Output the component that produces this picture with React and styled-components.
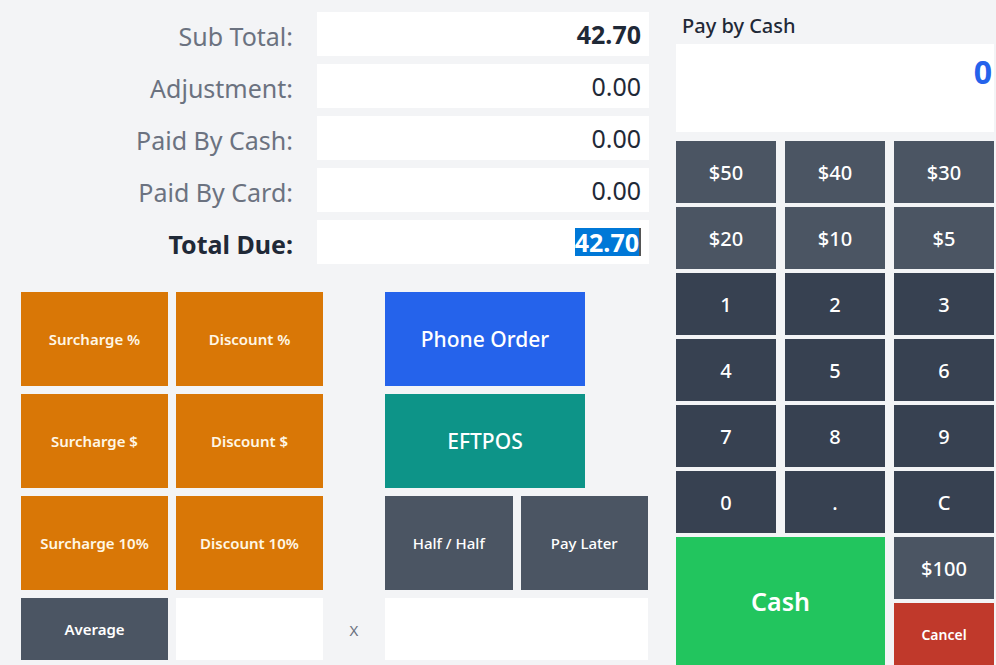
import React from "react";
import styled, { createGlobalStyle } from "styled-components";

const Global = createGlobalStyle`
  html, body { margin: 0; padding: 0; background: #f3f4f6; }
  body { font-family: "Noto Sans", "Open Sans", sans-serif; overflow: hidden; }
  * { box-sizing: border-box; }
`;

const Page = styled.div`
  display: flex;
  gap: 27px;
  padding: 12px 0 0 21px;
  height: 665px;
  width: 996px;
  overflow: hidden;
  background: #f3f4f6;
`;

const LeftCol = styled.div`
  width: 628px;
  display: flex;
  flex-direction: column;
  gap: 28px;
`;

const Summary = styled.div`
  display: flex;
  flex-direction: column;
  gap: 8px;
`;

const SummaryRow = styled.div`
  display: grid;
  grid-template-columns: 272px 332px;
  column-gap: 24px;
  height: 44px;
  align-items: center;
`;

const Label = styled.div`
  text-align: right;
  font-size: 25px;
  color: ${(p) => (p.$strong ? "#1f2937" : "#6b7280")};
  font-weight: ${(p) => (p.$strong ? 700 : 400)};
  padding-top: 4px;
`;

const ValueBox = styled.div`
  height: 44px;
  background: #fff;
  display: flex;
  align-items: center;
  justify-content: flex-end;
  padding-right: 8px;
  font-size: 25px;
  color: #1f2937;
  font-weight: ${(p) => (p.$bold ? 700 : 400)};
`;

const Selected = styled.span`
  background: #0078d7;
  color: #fff;
  line-height: 28px;
  border-right: 2px solid #555;
`;

const ActionGrid = styled.div`
  display: grid;
  grid-template-columns: 147px 147px 46px 263px;
  grid-template-rows: 94px 94px 94px 62px;
  gap: 8px;
`;

const Btn = styled.button`
  border: none;
  margin: 0;
  padding: 0;
  font-family: inherit;
  display: flex;
  align-items: center;
  justify-content: center;
  color: ${(p) => p.$fg || "#fff"};
  background: ${(p) => p.$bg};
  font-size: ${(p) => p.$size || 15}px;
  font-weight: ${(p) => p.$weight || 600};
  cursor: pointer;
`;

const WideBtn = styled(Btn)`
  width: 200px;
`;

const Split = styled.div`
  display: flex;
  gap: 8px;
  & > * { flex: 1; }
`;

const Blank = styled.div`
  background: #fff;
`;

const XMark = styled.div`
  display: flex;
  align-items: center;
  justify-content: center;
  color: #6b7280;
  font-size: 15px;
  padding-top: 2px;
`;

const RightCol = styled.div`
  width: 318px;
  display: flex;
  flex-direction: column;
`;

const PanelTitle = styled.div`
  height: 32px;
  padding: 0 0 6px 6px;
  font-size: 20px;
  color: #1f2937;
  font-weight: 500;
  display: flex;
  align-items: center;
`;

const Display = styled.div`
  height: 88px;
  background: #fff;
  margin-bottom: 9px;
  display: flex;
  justify-content: flex-end;
  align-items: flex-start;
  padding: 6px 2px 0 0;
  font-size: 32px;
  font-weight: 700;
  color: #2563eb;
  line-height: 44px;
`;

const Keypad = styled.div`
  display: grid;
  grid-template-columns: repeat(3, 100px);
  grid-auto-rows: 62px;
  column-gap: 9px;
  row-gap: 4px;
`;

const CashBtn = styled(Btn)`
  grid-column: span 2;
  grid-row: span 2;
`;

const ORANGE = "#d97706";
const SLATE = "#4b5563";
const DARK = "#374151";

const rows = [
  ["Sub Total:", "42.70", true],
  ["Adjustment:", "0.00"],
  ["Paid By Cash:", "0.00"],
  ["Paid By Card:", "0.00"],
];

export default function App() {
  return (
    <>
      <Global />
      <Page>
        <LeftCol>
          <Summary>
            {rows.map(([l, v, b]) => (
              <SummaryRow key={l}>
                <Label>{l}</Label>
                <ValueBox $bold={b}>{v}</ValueBox>
              </SummaryRow>
            ))}
            <SummaryRow>
              <Label $strong>Total Due:</Label>
              <ValueBox $bold>
                <Selected>42.70</Selected>
              </ValueBox>
            </SummaryRow>
          </Summary>
          <ActionGrid>
            <Btn $bg={ORANGE} $fg="#fff7e6">Surcharge %</Btn>
            <Btn $bg={ORANGE} $fg="#fff7e6">Discount %</Btn>
            <div />
            <WideBtn $bg="#2563eb" $size={21} $weight={500}>Phone Order</WideBtn>
            <Btn $bg={ORANGE} $fg="#fff7e6">Surcharge $</Btn>
            <Btn $bg={ORANGE} $fg="#fff7e6">Discount $</Btn>
            <div />
            <WideBtn $bg="#0d9488" $size={21} $weight={500}>EFTPOS</WideBtn>
            <Btn $bg={ORANGE} $fg="#fff7e6">Surcharge 10%</Btn>
            <Btn $bg={ORANGE} $fg="#fff7e6">Discount 10%</Btn>
            <div />
            <Split>
              <Btn $bg={SLATE} $weight={500}>Half / Half</Btn>
              <Btn $bg={SLATE} $weight={500}>Pay Later</Btn>
            </Split>
            <Btn $bg={SLATE}>Average</Btn>
            <Blank />
            <XMark>X</XMark>
            <Blank />
          </ActionGrid>
        </LeftCol>
        <RightCol>
          <PanelTitle>Pay by Cash</PanelTitle>
          <Display>0</Display>
          <Keypad>
            {["$50", "$40", "$30", "$20", "$10", "$5"].map((k) => (
              <Btn key={k} $bg={SLATE} $size={20} $weight={500}>{k}</Btn>
            ))}
            {["1", "2", "3", "4", "5", "6", "7", "8", "9", "0", ".", "C"].map((k) => (
              <Btn key={k} $bg={DARK} $size={20} $weight={500}>{k}</Btn>
            ))}
            <CashBtn $bg="#22c55e" $size={25} $weight={600}>Cash</CashBtn>
            <Btn $bg={SLATE} $size={20} $weight={500}>$100</Btn>
            <Btn $bg="#c0392b" $size={14} $weight={600}>Cancel</Btn>
          </Keypad>
        </RightCol>
      </Page>
    </>
  );
}
